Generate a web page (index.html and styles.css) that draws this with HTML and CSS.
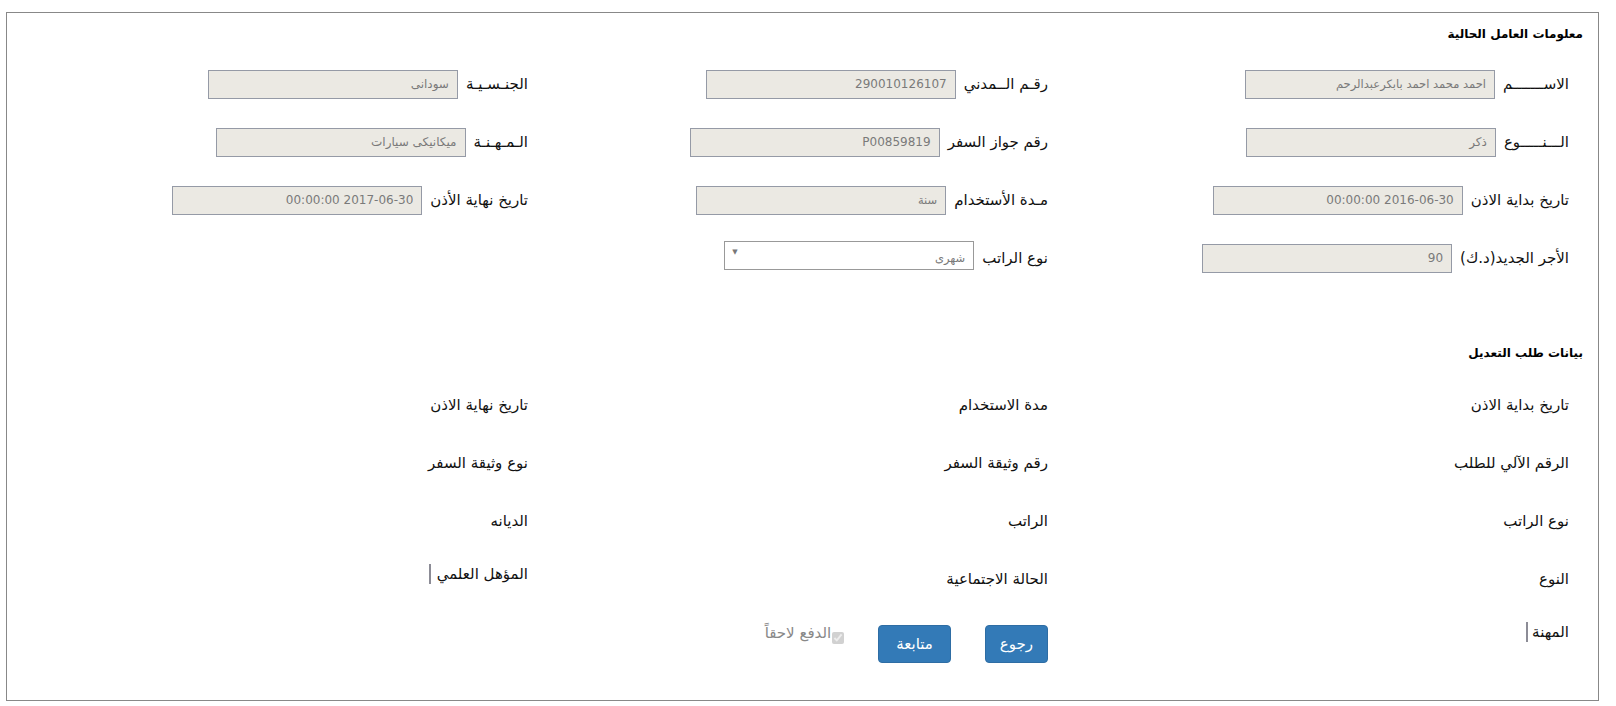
FILE: index.html
```html
<!DOCTYPE html>
<html lang="ar" dir="rtl">
<head>
<meta charset="utf-8">
<title>معلومات العامل</title>
<link rel="stylesheet" href="styles.css">
</head>
<body>
<div class="panel">
  <div class="section-title">معلومات العامل الحالية</div>
  <div class="grid grid-top">
    <div class="cell"><label class="lbl">الاســـــــم</label><input class="field small" readonly value="احمد محمد احمد بابكرعبدالرحم"></div>
    <div class="cell"><label class="lbl">رقـم الــمدني</label><input class="field" readonly value="290010126107"></div>
    <div class="cell"><label class="lbl">الجنـسـيـة</label><input class="field" readonly value="سودانى"></div>

    <div class="cell"><label class="lbl">الـــنـــــوع</label><input class="field" readonly value="ذكر"></div>
    <div class="cell"><label class="lbl">رقم جواز السفر</label><input class="field" readonly value="P00859819"></div>
    <div class="cell"><label class="lbl">الـمـهـنـة</label><input class="field" readonly value="ميكانيكى سيارات"></div>

    <div class="cell"><label class="lbl">تاريخ بداية الاذن</label><input class="field" readonly value="2016-06-30 00:00:00"></div>
    <div class="cell"><label class="lbl">مـدة الأستخدام</label><input class="field small" readonly value="سنة"></div>
    <div class="cell"><label class="lbl">تاريخ نهاية الأذن</label><input class="field" readonly value="2017-06-30 00:00:00"></div>

    <div class="cell"><label class="lbl">الأجر الجديد(د.ك)</label><input class="field" readonly value="90"></div>
    <div class="cell"><label class="lbl">نوع الراتب</label><div class="select"><span class="select-text">شهرى</span><span class="select-arrow">▼</span></div></div>
    <div class="cell"></div>
  </div>

  <div class="section-title second">بيانات طلب التعديل</div>
  <div class="grid grid-bottom">
    <div class="cell"><span class="lbl">تاريخ بداية الاذن</span></div>
    <div class="cell"><span class="lbl">مدة الاستخدام</span></div>
    <div class="cell"><span class="lbl">تاريخ نهاية الاذن</span></div>

    <div class="cell"><span class="lbl">الرقم الآلي للطلب</span></div>
    <div class="cell"><span class="lbl">رقم وثيقة السفر</span></div>
    <div class="cell"><span class="lbl">نوع وثيقة السفر</span></div>

    <div class="cell"><span class="lbl">نوع الراتب</span></div>
    <div class="cell"><span class="lbl">الراتب</span></div>
    <div class="cell"><span class="lbl">الديانه</span></div>

    <div class="cell"><span class="lbl">النوع</span></div>
    <div class="cell"><span class="lbl">الحالة الاجتماعية</span></div>
    <div class="cell raised"><span class="lbl">المؤهل العلمي</span><span class="bar"></span></div>

    <div class="cell last"><span class="lbl">المهنة</span><span class="bar"></span></div>
    <div class="cell actions">
      <button class="btn">رجوع</button>
      <button class="btn wide">متابعة</button>
      <label class="later"><input type="checkbox" checked disabled><span>الدفع لاحقاً</span></label>
    </div>
    <div class="cell"></div>
  </div>
</div>
</body>
</html>
```

FILE: styles.css
```css
body {
  margin: 0;
  background: #fff;
  font-family: "DejaVu Sans", "Noto Sans", sans-serif;
  color: #000;
}

.panel {
  box-sizing: border-box;
  width: 1593px;
  height: 689px;
  margin: 12px 17px 0 6px;
  border: 1px solid #888;
  padding: 11px 15px 0 0;
}

.section-title {
  font-size: 12px;
  font-weight: bold;
  line-height: 20px;
  height: 20px;
}

.section-title.second {
  margin-top: 56px;
}

.grid {
  display: grid;
  grid-template-columns: 521px 520px 520px;
  margin-right: 14px;
}

.grid-top {
  margin-top: 11px;
  grid-auto-rows: 58px;
}

.grid-bottom {
  margin-top: 13px;
  grid-template-rows: repeat(4, 58px) auto;
}

.cell {
  display: flex;
  align-items: center;
  gap: 8px;
}

.lbl {
  font-size: 15px;
  line-height: 20px;
  white-space: nowrap;
  color: #111;
}

.field {
  box-sizing: border-box;
  width: 250px;
  height: 29px;
  margin: 0;
  border: 1px solid #959aa6;
  background: #ebe9e3;
  color: #7a7a7a;
  font-family: "DejaVu Sans", sans-serif;
  font-size: 12px;
  padding: 0 8px;
  text-align: right;
  direction: rtl;
  outline: none;
}

.field.small {
  font-size: 11.5px;
}

.select {
  box-sizing: border-box;
  width: 250px;
  height: 29px;
  margin-bottom: 6px;
  border: 1px solid #999;
  background: #fff;
  display: flex;
  justify-content: space-between;
  padding: 0 8px 0 7px;
}

.select-text {
  align-self: center;
  padding-top: 5px;
  font-size: 11.5px;
  color: #7a7a7a;
}

.select-arrow {
  align-self: flex-start;
  margin-top: 6px;
  font-size: 7px;
  color: #777;
}

.bar {
  width: 2px;
  height: 20px;
  background: #8c8c96;
}

.cell.raised {
  padding-bottom: 11px;
  gap: 6px;
}

.cell.last {
  align-items: flex-start;
  padding-top: 14px;
  gap: 4px;
}

.cell.actions {
  align-items: flex-start;
  padding-top: 17px;
  gap: 34px;
}

.btn {
  height: 38px;
  padding: 0 14px;
  border: 1px solid #2e6da4;
  border-radius: 4px;
  background: #337ab7;
  color: #fff;
  font-family: "DejaVu Sans", sans-serif;
  font-size: 15px;
  cursor: pointer;
}

.btn.wide {
  padding: 0 17px;
}

.later {
  display: flex;
  align-items: flex-start;
  margin-top: -2px;
  color: #888;
  font-size: 15px;
  line-height: 20px;
}

.later input {
  width: 12px;
  height: 12px;
  margin: 9px 0 0 1px;
}
```
